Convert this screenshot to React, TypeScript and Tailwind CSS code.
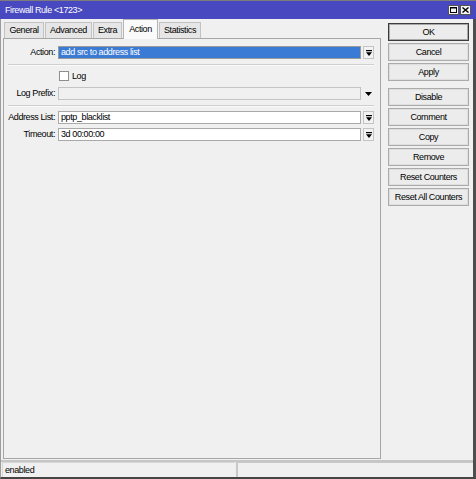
import React from "react";

const font = { fontFamily: '"Liberation Sans", Arial, sans-serif' };

function DropBtn() {
  return (
    <div className="ml-[2px] w-[11px] h-[13px] border border-[#c4c4c4] bg-[#f2f2f2] flex items-center justify-center">
      <svg width="6" height="6" viewBox="0 0 6 6">
        <rect x="0" y="0" width="6" height="1.2" fill="#000" />
        <polygon points="0,2.2 6,2.2 3,6" fill="#000" />
      </svg>
    </div>
  );
}

function Label({ children }: { children: React.ReactNode }) {
  return <div className="w-[51px] text-right whitespace-nowrap">{children}</div>;
}

function Sep() {
  return <div className="ml-[4px] w-[366px] h-[2px] border-t border-[#cfcfcf] border-b border-b-[#fafafa]" />;
}

function Btn({ children, primary }: { children: React.ReactNode; primary?: boolean }) {
  return (
    <div
      className={
        "w-[81px] h-[18px] flex items-center justify-center bg-[#ececec] whitespace-nowrap border " +
        (primary ? "border-[#3c3c3c] shadow-[inset_0_0_0_1px_#a8a8a8]" : "border-[#ababab] shadow-[inset_0_0_0_1px_#dedede]")
      }
    >
      {children}
    </div>
  );
}

function Tab({ children, active, w }: { children: React.ReactNode; active?: boolean; w: string }) {
  return (
    <div
      className={
        "flex items-center justify-center border border-b-0 whitespace-nowrap " +
        w +
        " " +
        (active
          ? "h-[20px] bg-[#fafafa] border-[#b4b4b4] -mb-[1px] relative z-10"
          : "h-[16px] bg-[#e6e6e6] border-[#c2c2c2]")
      }
    >
      {children}
    </div>
  );
}

export default function App() {
  return (
    <div
      className="w-[476px] h-[479px] flex flex-col bg-[#f0f0f0] overflow-hidden text-[9px] tracking-[-0.4px] text-black leading-none"
      style={font}
    >
      <div className="h-[1px] bg-[#7c7c7c]" />
      <div className="h-[18px] bg-[#4848c0] flex items-center pl-[4px] pr-[5px] border-l border-[#4848c0]">
        <span className="text-white">Firewall Rule &lt;1723&gt;</span>
        <div className="flex-1" />
        <div className="flex gap-[1px]">
          <div className="w-[11px] h-[10px] bg-[#f4f4f4] border border-[#555] flex items-center justify-center">
            <svg width="7" height="6" viewBox="0 0 7 6">
              <rect x="0.5" y="0.5" width="6" height="5" fill="none" stroke="#000" strokeWidth="1" />
              <rect x="0" y="0" width="7" height="1.5" fill="#000" />
            </svg>
          </div>
          <div className="w-[11px] h-[10px] bg-[#f4f4f4] border border-[#555] flex items-center justify-center">
            <svg width="7" height="6" viewBox="0 0 7 6">
              <path d="M0.5 0.5 L6.5 5.5 M6.5 0.5 L0.5 5.5" stroke="#000" strokeWidth="1.4" />
            </svg>
          </div>
        </div>
      </div>

      <div className="flex-1 flex flex-col border-l border-l-[#9c9c9c] border-r-[3px] border-r-[#4e4e4e] border-b-[2px] border-b-[#454545]">
        <div className="h-[440px] flex">
          <div className="pl-[2px] flex flex-col">
            <div className="h-[19px] flex items-end pl-[1px] gap-[1px]">
              <Tab w="w-[40px]">General</Tab>
              <Tab w="w-[47px]">Advanced</Tab>
              <Tab w="w-[29px]">Extra</Tab>
              <Tab w="w-[35px]" active>
                Action
              </Tab>
              <Tab w="w-[42px]">Statistics</Tab>
            </div>
            <div className="w-[378px] h-[421px] border border-[#a6a6a6] flex flex-col">
              <div className="mt-[7px] flex items-center h-[13px]">
                <Label>Action:</Label>
                <div className="ml-[3px] w-[303px] h-[13px] bg-[#3a7bd5] border border-[#9a9a9a] text-white flex items-center pl-[2px] whitespace-nowrap">
                  add src to address list
                </div>
                <DropBtn />
              </div>
              <div className="mt-[5px]">
                <Sep />
              </div>
              <div className="mt-[5px] flex items-center h-[10px]">
                <div className="ml-[55px] w-[10px] h-[10px] border border-[#8e8e8e] bg-white" />
                <span className="ml-[3px]">Log</span>
              </div>
              <div className="mt-[6px] flex items-center h-[13px]">
                <Label>Log Prefix:</Label>
                <div className="ml-[3px] w-[303px] h-[13px] bg-[#f0f0f0] border border-[#c4c4c4]" />
                <div className="ml-[2px] w-[11px] h-[13px] flex items-center justify-center">
                  <svg width="7" height="4" viewBox="0 0 7 4">
                    <polygon points="0,0 7,0 3.5,4" fill="#000" />
                  </svg>
                </div>
              </div>
              <div className="mt-[5px]">
                <Sep />
              </div>
              <div className="mt-[4px] flex items-center h-[13px]">
                <Label>Address List:</Label>
                <div className="ml-[3px] w-[303px] h-[13px] bg-white border border-[#a9a9a9] flex items-center pl-[2px]">
                  pptp_blacklist
                </div>
                <DropBtn />
              </div>
              <div className="mt-[4px] flex items-center h-[13px]">
                <Label>Timeout:</Label>
                <div className="ml-[3px] w-[303px] h-[13px] bg-white border border-[#a9a9a9] flex items-center pl-[2px]">
                  3d 00:00:00
                </div>
                <DropBtn />
              </div>
            </div>
          </div>
          <div className="ml-[7px] pt-[4px] flex flex-col gap-[2px]">
            <Btn primary>OK</Btn>
            <Btn>Cancel</Btn>
            <Btn>Apply</Btn>
            <div className="h-[3px]" />
            <Btn>Disable</Btn>
            <Btn>Comment</Btn>
            <Btn>Copy</Btn>
            <Btn>Remove</Btn>
            <Btn>Reset Counters</Btn>
            <Btn>Reset All Counters</Btn>
          </div>
        </div>
        <div className="h-[2px] bg-[#c6c6c6] mt-[1px]" />
        <div className="flex-1 flex pl-[1px]">
          <div className="w-[233px] border-l border-t border-[#d6d6d6] flex items-center pl-[2px]">enabled</div>
          <div className="ml-[1px] flex-1 border-l-2 border-t border-[#c8c8c8]" />
        </div>
      </div>
    </div>
  );
}
